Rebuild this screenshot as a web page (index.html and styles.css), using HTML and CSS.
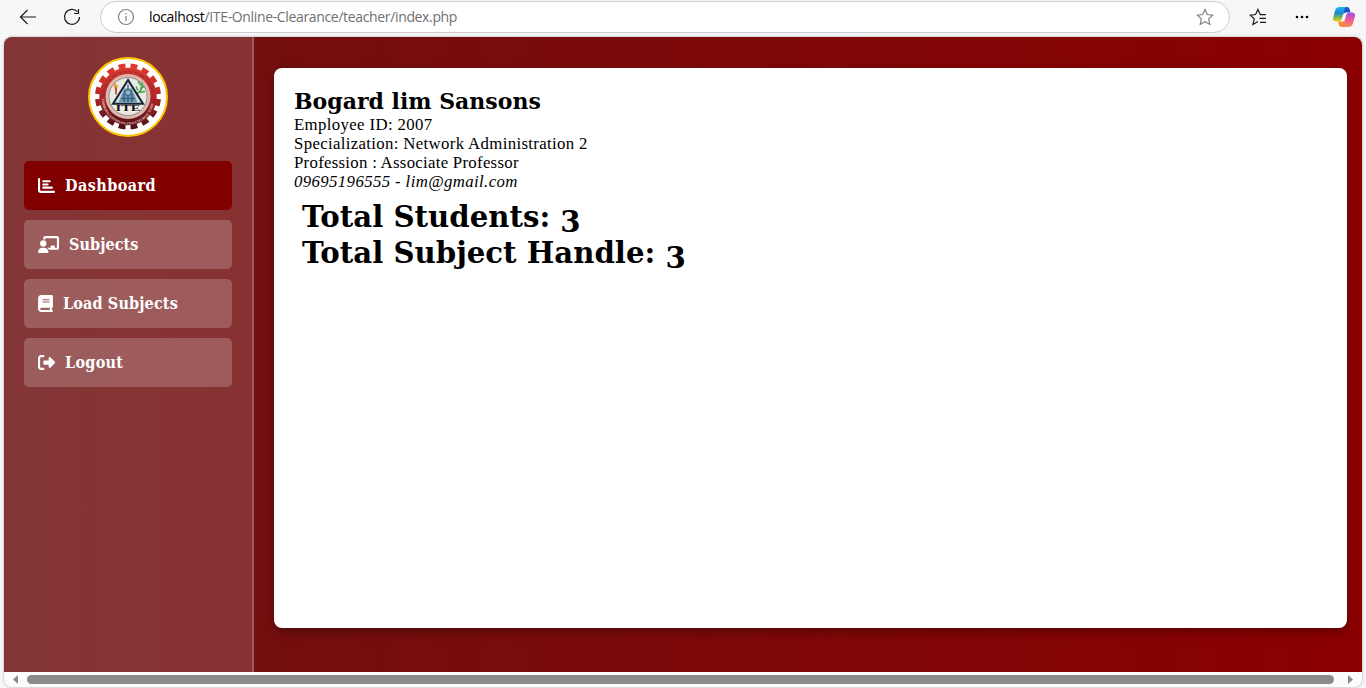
FILE: index.html
```html
<!DOCTYPE html>
<html lang="en">
<head>
<meta charset="utf-8">
<title>Teacher Dashboard</title>
<link rel="stylesheet" href="styles.css">
</head>
<body>
<header class="toolbar">
  <svg class="tool back" viewBox="0 0 18 18"><path d="M17 9H2M8.500 2L1.500 9l7 7"/></svg>
  <svg class="tool reload" viewBox="0 0 18 18"><path d="M14.500 3.700A7.500 7.500 0 1 0 16.500 9M15.500 1v4.500H11"/></svg>
  <div class="address">
    <svg class="tool info" viewBox="0 0 18 18"><circle cx="9" cy="9" r="7.500"/><path d="M9 8v5M9 5v1.300"/></svg>
    <span class="url"><b>localhost</b>/ITE-Online-Clearance/teacher/index.php</span>
    <svg class="tool star" viewBox="0 0 18 18"><path d="M9 1.500l2.300 5 5.400.6-4 3.800 1.100 5.500L9 13.700l-4.800 2.700 1.100-5.500-4-3.800 5.400-.6z"/></svg>
  </div>
  <svg class="tool favorites" viewBox="0 0 18 18"><path d="M11 6.600h6M10.500 10.400H17M11 14.400h6M11.200 6.500L8.900 1.500l-2.300 5-5.400.6 4 3.700-1.200 5.700L9 13.600"/></svg>
  <svg class="more" viewBox="0 0 14 4"><circle cx="2" cy="2" r="1.300"/><circle cx="7" cy="2" r="1.300"/><circle cx="12" cy="2" r="1.300"/></svg>
  <svg class="copilot" viewBox="0 0 22 20">
    <defs>
      <linearGradient id="cool" x1="0" y1="0" x2="0" y2="1"><stop offset="0" stop-color="#24b9ee"/><stop offset=".4" stop-color="#1689d8"/><stop offset=".7" stop-color="#70b854"/><stop offset="1" stop-color="#f2cc16"/></linearGradient>
      <linearGradient id="warm" x1="0" y1="0" x2="0" y2="1"><stop offset="0" stop-color="#9b4ff0"/><stop offset=".5" stop-color="#ed5799"/><stop offset="1" stop-color="#ff924a"/></linearGradient>
    </defs>
    <path fill="#1855cb" d="M10 0h4q2 0 2.600 2l.9 3.500H13q-2 0-2.500 2z"/>
    <path fill="#ff863f" d="M5 14.500h4.500q1.800 0 2.300-2l-.8 7.500H8.500q-2 0-2.600-2z"/>
    <path fill="url(#cool)" d="M6.500 0h7q-1.700.5-2.200 2.400L8.800 12q-.7 2.500-3 2.500H3q-4 0-2.800-4.200l2-7Q3.200 0 6.500 0z"/>
    <path fill="url(#warm)" d="M15.500 20h-7q1.700-.5 2.200-2.400L13.200 8q.7-2.500 3-2.500H19q4 0 2.800 4.200l-2 7Q18.800 20 15.500 20z"/>
  </svg>
</header>
<div class="window">
  <div class="page">
    <aside class="sidebar">
      <svg class="logo" viewBox="0 0 80 80">
        <defs>
          <linearGradient id="gear" gradientUnits="userSpaceOnUse" x1="0" y1="7" x2="0" y2="71"><stop offset="0" stop-color="#e33a2e"/><stop offset=".45" stop-color="#bd2928"/><stop offset=".75" stop-color="#791a20"/><stop offset="1" stop-color="#501016"/></linearGradient>
          <path id="arcTop" d="M18.200 39a23.800 23.800 0 0 1 47.600 0"/>
          <path id="arcBottom" d="M16 41a26 26 0 0 0 52 0"/>
        </defs>
        <circle cx="40" cy="40" r="39" fill="#fff" stroke="#ffc400" stroke-width="2"/>
        <g transform="translate(-2 .5)">
          <circle cx="42" cy="39" r="25" fill="none" stroke="url(#gear)" stroke-width="7.400"/>
          <circle cx="42" cy="39" r="30.500" fill="none" stroke="url(#gear)" stroke-width="5" pathLength="32" stroke-dasharray="1.150 .85" stroke-dashoffset="-.42"/>
          <circle cx="42" cy="39" r="22.500" fill="#d8b8b0"/>
          <circle cx="42" cy="39" r="19" fill="#e9e9e4" stroke="#85706a" stroke-width=".7"/>
          <text class="seal"><textPath href="#arcTop" textLength="70">INSTITUTE OF TECHNICAL EDUCATION</textPath></text>
          <text class="seal light"><textPath href="#arcBottom" textLength="76">ZAMBOANGA PENINSULA POLYTECHNIC STATE</textPath></text>
          <path d="M27 26l3 9 2-8-2 1-1-5-1 4z" fill="#ef9526"/>
          <path d="M30 30v7" stroke="#b63d20" stroke-width="1.500"/>
          <path d="M51 36q6-3 5-11M52 33l-2-4M54 31l4-2M55 28l-3-4M52 35l7-1" stroke="#47a34b" stroke-width="1.500" fill="none"/>
          <path d="M42 22.500L27 46.300h30z" fill="#d4dde0" stroke="#182331" stroke-width="2"/>
          <path d="M38 31h8l5.500 14h-19z" fill="#6d9ab8"/>
          <path d="M42 27v18M35 41h14M38 34h8M38 36v9M46 36v9" stroke="#315775" stroke-width="1.200" fill="none"/>
          <circle cx="42" cy="35" r="3" fill="#91b7ca" stroke="#315775"/>
          <path d="M28 47.400h28l-3 7H31z" fill="#efeee8"/>
          <text class="initials" x="29.500" y="53.400" textLength="25" lengthAdjust="spacingAndGlyphs">ITE</text>
        </g>
      </svg>
      <nav class="menu">
        <a class="item active"><svg class="chart" viewBox="0 0 512 512"><path d="M32 32c17.700 0 32 14.300 32 32V400c0 8.800 7.200 16 16 16H480c17.700 0 32 14.300 32 32s-14.300 32-32 32H80c-44.200 0-80-35.800-80-80V64C0 46.300 14.300 32 32 32zm96 96c0-17.700 14.300-32 32-32l192 0c17.700 0 32 14.300 32 32s-14.300 32-32 32l-192 0c-17.700 0-32-14.300-32-32zm32 64H288c17.700 0 32 14.300 32 32s-14.300 32-32 32H160c-17.700 0-32-14.300-32-32s14.300-32 32-32zm0 96H416c17.700 0 32 14.300 32 32s-14.300 32-32 32H160c-17.700 0-32-14.300-32-32s14.300-32 32-32z"/></svg><span class="w-dashboard">Dashboard</span></a>
        <a class="item"><svg class="board" viewBox="0 0 640 512"><path d="M160 64c0-35.300 28.700-64 64-64H576c35.300 0 64 28.700 64 64V352c0 35.300-28.700 64-64 64H336.800c-11.800-25.500-29.900-47.500-52.400-64H384V320c0-17.700 14.300-32 32-32h64c17.700 0 32 14.300 32 32v32h64V64L224 64v49.100C205.200 102.200 183.300 96 160 96V64zm0 64a96 96 0 1 1 0 192 96 96 0 1 1 0-192zM133.300 352h53.300C260.300 352 320 411.700 320 485.300c0 14.700-11.900 26.700-26.700 26.700H26.700C11.900 512 0 500.100 0 485.300C0 411.700 59.700 352 133.300 352z"/></svg><span class="w-subjects">Subjects</span></a>
        <a class="item"><svg class="book" viewBox="0 0 448 512"><path d="M96 0C43 0 0 43 0 96V416c0 53 43 96 96 96H384h32c17.700 0 32-14.300 32-32s-14.300-32-32-32V384c17.700 0 32-14.300 32-32V32c0-17.700-14.300-32-32-32H384 96zm0 384H352v64H96c-17.700 0-32-14.300-32-32s14.300-32 32-32zm32-240c0-8.800 7.200-16 16-16H336c8.800 0 16 7.200 16 16s-7.200 16-16 16H144c-8.800 0-16-7.200-16-16zm16 48H336c8.800 0 16 7.200 16 16s-7.200 16-16 16H144c-8.800 0-16-7.200-16-16s7.200-16 16-16z"/></svg><span class="w-load">Load Subjects</span></a>
        <a class="item"><svg class="exit" viewBox="0 0 512 512"><path d="M377.900 105.900L500.700 228.700c7.200 7.200 11.300 17.100 11.300 27.300s-4.100 20.100-11.300 27.300L377.900 406.100c-6.400 6.400-15 9.900-24 9.900c-18.700 0-33.900-15.200-33.900-33.900l0-62.100-128 0c-17.700 0-32-14.300-32-32l0-64c0-17.700 14.300-32 32-32l128 0 0-62.100c0-18.700 15.200-33.900 33.900-33.900c9 0 17.600 3.600 24 9.900zM160 96L96 96c-17.700 0-32 14.300-32 32l0 256c0 17.700 14.300 32 32 32l64 0c17.700 0 32 14.300 32 32s-14.300 32-32 32l-64 0c-53 0-96-43-96-96L0 128C0 75 43 32 96 32l64 0c17.700 0 32 14.300 32 32s-14.300 32-32 32z"/></svg><span class="w-logout">Logout</span></a>
      </nav>
    </aside>
    <main class="content">
      <section class="card">
        <h2 class="name">Bogard lim Sansons</h2>
        <p class="line l-id">Employee ID: 2007</p>
        <p class="line l-spec">Specialization: Network Administration 2</p>
        <p class="line l-prof">Profession : Associate Professor</p>
        <p class="line l-contact"><i>09695196555 - lim@gmail.com</i></p>
        <div class="totals">
          <h1 class="total">Total Students: <span class="figure">3</span></h1>
          <h1 class="total">Total Subject Handle: <span class="figure">3</span></h1>
        </div>
      </section>
    </main>
  </div>
  <div class="scrollbar">
    <svg class="arrow" viewBox="0 0 5 9"><path d="M5 0v9L0 4.500z"/></svg>
    <div class="thumb"></div>
    <svg class="arrow" viewBox="0 0 5 9"><path d="M0 0v9l5-4.500z"/></svg>
  </div>
</div>
</body>
</html>
```
FILE: styles.css
```css
* { box-sizing: border-box; }
html, body { height: 100%; margin: 0; overflow: hidden; }
body { display: flex; flex-direction: column; background: #f7f7f7; font-family: Georgia, "Liberation Serif", serif; color: #000; }
.toolbar { height: 37px; display: flex; align-items: flex-start; padding: 1px 11px 0 19px; flex: none; }
.tool { width: 18px; height: 18px; fill: none; stroke: #1b1b1b; stroke-width: 1.200; flex: none; margin-top: 7px; }
.reload { margin-left: 26px; }
.address { display: flex; align-items: center; width: 1130px; height: 32px; margin-left: 19px; padding: 0 15px 0 16px; background: #fff; border: 1px solid #ccc; border-radius: 16px; flex: none; }
.address .tool { margin-top: 0; stroke: #808080; }
.url { flex: 1; margin-left: 14px; font: 14px/20px "Open Sans", "Noto Sans", sans-serif; letter-spacing: -.35px; color: #707070; white-space: nowrap; }
.url b { font-weight: 400; color: #000; }
.favorites { margin-left: 19px; }
.more { width: 14px; height: 4px; margin: 14px 0 0 28px; flex: none; }
.copilot { width: 22px; height: 20px; margin: 6px 0 0 24px; flex: none; }
.window { width: 1358px; height: 650px; margin-left: 4px; border-radius: 8px; overflow: hidden; background: #fcfcfc; box-shadow: 0 0 3px rgba(0,0,0,.3); flex: none; }
.page { display: flex; height: 635px; background: linear-gradient(90deg, #6e1212, #8b0000); }
.sidebar { width: 250px; padding: 20px; border-right: 2px solid rgba(255,255,255,.2); background: rgba(255,255,255,.15); flex: none; }
.logo { display: block; width: 80px; height: 80px; margin: 0 auto 24px; }
.seal { font: bold 3.300px "Liberation Serif", serif; fill: #6b3430; }
.light { fill: #f2d5cc; }
.initials { font: bold 8px "Liberation Serif", serif; fill: #111; }
.menu { display: flex; flex-direction: column; gap: 10px; }
.item { display: flex; align-items: center; gap: 10px; height: 49px; padding: 0 14px; border-radius: 5px; background: rgba(255,255,255,.2); color: #fff; font: bold 16px/19px "DejaVu Serif Condensed", "DejaVu Serif", serif; font-stretch: condensed; white-space: nowrap; }
.item svg { height: 17px; fill: #fff; flex: none; }
.active { background: maroon; }
.chart, .exit { width: 17px; }
.board { width: 21px; }
.book { width: 15px; }
.w-dashboard { letter-spacing: .45px; }
.w-subjects { letter-spacing: .08px; }
.w-load { letter-spacing: .15px; }
.w-logout { letter-spacing: .3px; }
.content { flex: 1; padding: 31px 15px 44px 20px; }
.card { height: 560px; padding: 20px; border-radius: 8px; background: #fff; box-shadow: 0 4px 10px rgba(0,0,0,.3); }
.name, .line, .total { margin: 0; white-space: nowrap; }
.name { font: bold 22px/27px "DejaVu Serif", serif; }
.line { font-size: 16.800px; line-height: 19px; }
.l-id { letter-spacing: .36px; }
.l-spec { letter-spacing: .34px; }
.l-prof { letter-spacing: .28px; }
.l-contact { letter-spacing: .38px; }
.totals { padding: 8px; }
.total { font: bold 29.200px/36px "DejaVu Serif", serif; }
.figure { display: inline-block; line-height: 30px; transform: translateY(5px); }
.scrollbar { display: flex; align-items: center; height: 15px; padding: 0 9px; }
.arrow { width: 5px; height: 9px; fill: #8b8b8b; flex: none; }
.thumb { flex: 1; height: 9px; margin: 0 14px 0 9px; border-radius: 5px; background: #8b8b8b; }
```
